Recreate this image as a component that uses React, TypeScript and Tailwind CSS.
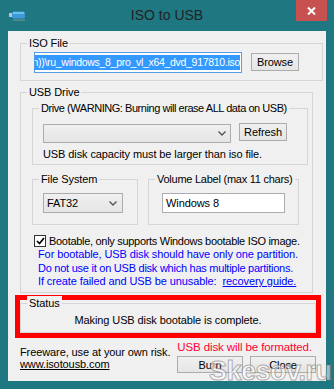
import React from "react";

const font = "font-['Liberation_Sans',Arial,sans-serif]";

function Group({
  label,
  className,
  labelClass = "",
  children,
}: {
  label: string;
  className: string;
  labelClass?: string;
  children?: React.ReactNode;
}) {
  return (
    <div className={`relative border border-[#d5d5d5] ${className}`}>
      <span
        className={`absolute -top-[8px] left-[6px] bg-[#f0f0f0] px-[2px] leading-[14px] text-[11px] text-black whitespace-nowrap ${labelClass}`}
      >
        {label}
      </span>
      {children}
    </div>
  );
}

function Btn({ label, className }: { label: string; className: string }) {
  return (
    <div
      className={`flex items-center justify-center border border-[#acacac] bg-gradient-to-b from-[#f0f0f0] to-[#e5e5e5] text-[11px] leading-[14px] text-black ${className}`}
    >
      {label}
    </div>
  );
}

function Chevron() {
  return (
    <svg width="8" height="5" viewBox="0 0 8 5" className="shrink-0">
      <path d="M0.5 0.5 L4 4 L7.5 0.5" fill="none" stroke="#555" strokeWidth="1.4" />
    </svg>
  );
}

export default function App() {
  return (
    <div className={`relative w-[334px] h-[389px] bg-[#1f7881] flex flex-col overflow-hidden ${font} text-[11px] tracking-[-0.1px]`}>
      {/* Title bar */}
      <div className="h-[31px] flex items-start relative shrink-0">
        <svg width="18" height="10" viewBox="0 0 18 10" className="ml-[9px] mt-[11px]">
          <rect x="0" y="2" width="4" height="4" fill="#b8c4c8" />
          <rect x="3" y="0.5" width="13" height="7" rx="1.5" fill="#3c9ad8" />
          <rect x="4" y="1" width="11" height="2" fill="#6fc0ef" />
          <rect x="4" y="8.5" width="12" height="1.2" fill="#6e8f96" />
        </svg>
        <div className="absolute left-0 right-0 top-[6px] text-center text-[14px] leading-[18px] text-[#222] tracking-normal">
          ISO to USB
        </div>
        <div className="ml-auto mr-[7px] w-[31px] h-[21px] bg-[#c75050] flex items-center justify-center relative">
          <svg width="9" height="8" viewBox="0 0 9 8">
            <path d="M1 0.5 L8 7.5 M8 0.5 L1 7.5" stroke="#fff" strokeWidth="2" />
          </svg>
        </div>
      </div>

      {/* Client area */}
      <div className="mx-[8px] w-[318px] h-[350px] bg-[#f0f0f0] flex flex-col shrink-0">
        {/* ISO File */}
        <Group label="ISO File" className="ml-[12px] mt-[12px] w-[303px] h-[38px]">
          <div className="flex items-start pl-[13px] pt-[8px]">
            <div className="w-[208px] h-[21px] border border-[#569de5] bg-white flex justify-end items-center overflow-hidden pr-[1px]">
              <span className="whitespace-nowrap bg-[#3399ff] text-white leading-[15px] text-[10.5px] tracking-[-0.3px]">
                (Windows 8 (Russian))\ru_windows_8_pro_vl_x64_dvd_917810.iso
              </span>
            </div>
            <Btn label="Browse" className="ml-[9px] mt-[1px] w-[48px] h-[18px]" />
          </div>
        </Group>

        {/* USB Drive */}
        <Group label="USB Drive" className="ml-[12px] mt-[11px] w-[293px] h-[201px]">
          <Group
            label="Drive (WARNING: Burning will erase ALL data on USB)"
            labelClass="tracking-[-0.45px]"
            className="ml-[11px] mt-[15px] w-[276px] h-[57px]"
          >
            <div className="flex items-start ml-[10px] mt-[14px]">
              <div className="mt-[1px] w-[188px] h-[19px] border border-[#acacac] bg-gradient-to-b from-[#f0f0f0] to-[#e5e5e5] flex items-center justify-end pr-[4px]">
                <Chevron />
              </div>
              <Btn label="Refresh" className="ml-[8px] w-[48px] h-[18px]" />
            </div>
            <div className="ml-[10px] mt-[4px] leading-[14px] text-black whitespace-nowrap">
              USB disk capacity must be larger than iso file.
            </div>
          </Group>

          <div className="flex mt-[14px]">
            <Group label="File System" className="ml-[11px] w-[106px] h-[46px]">
              <div className="ml-[10px] mt-[13px] w-[80px] h-[20px] border border-[#acacac] bg-gradient-to-b from-[#f0f0f0] to-[#e5e5e5] flex items-center pl-[3px] pr-[5px]">
                <span className="text-black leading-[14px]">FAT32</span>
                <span className="ml-auto">
                  <Chevron />
                </span>
              </div>
            </Group>
            <Group label="Volume Label (max 11 chars)" labelClass="tracking-[-0.25px]" className="ml-[10px] w-[151px] h-[46px]">
              <div className="ml-[13px] mt-[13px] w-[123px] h-[20px] border border-[#abadb3] bg-white flex items-center pl-[3px]">
                <span className="text-black leading-[14px]">Windows 8</span>
              </div>
            </Group>
          </div>

          <div className="flex items-center mt-[10px] ml-[13px] h-[12px]">
            <div className="w-[12px] h-[12px] border border-[#333] bg-white flex items-center justify-center shrink-0">
              <svg width="9" height="8" viewBox="0 0 9 8">
                <path d="M1 4 L3.5 6.5 L8 1" fill="none" stroke="#000" strokeWidth="1.7" />
              </svg>
            </div>
            <span className="ml-[3px] leading-[14px] text-black whitespace-nowrap tracking-[-0.3px]">
              Bootable, only supports Windows bootable ISO image.
            </span>
          </div>

          <div className="ml-[17px] mt-[1px] text-[#0000ff] leading-[13.5px] whitespace-nowrap">
            <div>For bootable, USB disk should have only one partition.</div>
            <div className="tracking-[-0.25px]">Do not use it on USB disk which has multiple partitions.</div>
            <div>
              If create failed and USB be unusable:
              <span className="ml-[6px] underline">recovery guide.</span>
            </div>
          </div>
        </Group>

        {/* Status in red frame */}
        <div className="ml-[7px] mt-[2px] w-[306px] h-[43px] border-[5px] border-[#ff0000]">
          <Group label="Status" className="mt-[3px] h-[30px] w-full">
            <div className="pt-[9px] text-center leading-[14px] text-black">
              Making USB disk bootable is complete.
            </div>
          </Group>
        </div>

        {/* Bottom */}
        <div className="ml-[12px] w-[296px] flex justify-between mt-[2px]">
          <div className="mt-[6px] leading-[12px] text-black whitespace-nowrap">
            <div>Freeware, use at your own risk.</div>
            <div className="underline">www.isotousb.com</div>
          </div>
          <div className="flex flex-col items-end">
            <div className="pr-[4px] leading-[14px] text-[#ff0033] whitespace-nowrap text-[11.5px]">
              USB disk will be formatted.
            </div>
            <div className="flex mt-[2px] gap-[7px]">
              <Btn label="Burn" className="w-[66px] h-[17px]" />
              <Btn label="Close" className="w-[66px] h-[17px]" />
            </div>
          </div>
        </div>
      </div>

      {/* Watermark */}
      <div className="absolute left-[209px] top-[356px] text-[27px] leading-[30px] font-bold tracking-[-0.5px] text-[rgba(255,255,255,0.55)] [-webkit-text-stroke:1px_rgba(110,110,110,0.55)] pointer-events-none">
        Skesov.ru
      </div>
    </div>
  );
}
